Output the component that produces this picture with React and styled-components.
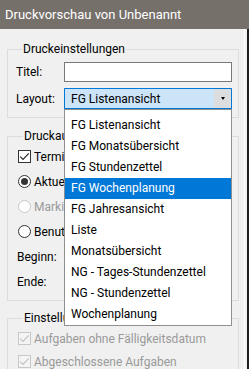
import React from "react";
import styled, { createGlobalStyle } from "styled-components";

const COLORS = {
  title: "#76706b",
  face: "#f0f0f0",
  groupLine: "#dcdcdc",
  text: "#000000",
  disabled: "#9a9a9a",
  accent: "#0078d7",
  accentLight: "#cce4f7",
};

const LAYOUTS = [
  "FG Listenansicht",
  "FG Monatsübersicht",
  "FG Stundenzettel",
  "FG Wochenplanung",
  "FG Jahresansicht",
  "Liste",
  "Monatsübersicht",
  "NG - Tages-Stundenzettel",
  "NG - Stundenzettel",
  "Wochenplanung",
];

const GlobalStyle = createGlobalStyle`
  body {
    margin: 0;
    background: ${COLORS.face};
    font-family: Roboto, "Noto Sans", sans-serif;
    font-size: 12px;
    color: ${COLORS.text};
  }
`;

const Window = styled.div`
  width: 249px;
  height: 369px;
  overflow: hidden;
  display: flex;
  flex-direction: column;
`;

const TitleBar = styled.div`
  height: 29px;
  flex: none;
  display: flex;
  align-items: center;
  padding-left: 5px;
  background: ${COLORS.title};
  color: #fff;
  font-size: 13px;
`;

const Frame = styled.div`
  flex: 1;
  display: flex;
  min-height: 0;
`;

const Panel = styled.div`
  flex: 1;
  background: ${COLORS.face};
  padding: 12px 5px 0 7px;
  display: flex;
  flex-direction: column;
`;

const Edge = styled.div`
  flex: none;
  width: 2px;
  border-left: 1px solid #fdfdfd;
  border-right: 2px solid #1c1c1c;
  background: ${COLORS.face};
`;

const Group = styled.fieldset`
  margin: 0 0 ${(p) => p.$gap || 0}px 0;
  padding: ${(p) => p.$pad};
  border: 1px solid ${COLORS.groupLine};
  display: flex;
  flex-direction: column;
  gap: ${(p) => p.$rowGap || 0}px;
  min-width: 0;
`;

const Legend = styled.legend`
  padding: 0 1px;
  margin-left: 6px;
  height: 16px;
  line-height: 16px;
  font-size: 12px;
`;

const Row = styled.div`
  display: flex;
  align-items: center;
  height: ${(p) => p.$h || 21}px;
  flex: none;
`;

const Label = styled.span`
  width: 48px;
  flex: none;
`;

const TextBox = styled.div`
  width: 168px;
  height: 20px;
  box-sizing: border-box;
  border: 1px solid #7a7a7a;
  background: #fff;
`;

const ComboWrap = styled.div`
  position: relative;
  width: 168px;
`;

const Combo = styled.div`
  height: 21px;
  box-sizing: border-box;
  border: 1px solid ${COLORS.accent};
  background: ${COLORS.accentLight};
  display: flex;
  align-items: center;
  padding-left: 6px;
`;

const ComboText = styled.span`
  flex: 1;
`;

const ComboButton = styled.span`
  width: 17px;
  align-self: stretch;
  background: #dcdddf;
  display: flex;
  align-items: center;
  justify-content: center;
`;

const Arrow = styled.span`
  width: 0;
  height: 0;
  border-left: 2.5px solid transparent;
  border-right: 2.5px solid transparent;
  border-top: 3px solid #000;
`;

const DropList = styled.ul`
  position: absolute;
  top: 100%;
  left: 0;
  right: 0;
  z-index: 5;
  margin: 0;
  padding: 5px 0 0;
  list-style: none;
  background: #fff;
  border: 1px solid #8f8f8f;
  box-sizing: border-box;
`;

const Item = styled.li`
  height: 21px;
  line-height: 21px;
  padding-left: 6px;
  white-space: nowrap;
  background: ${(p) => (p.$active ? COLORS.accent : "transparent")};
  color: ${(p) => (p.$active ? "#fff" : COLORS.text)};
`;

const Option = styled.div`
  display: flex;
  align-items: center;
  gap: 3px;
  height: ${(p) => p.$h || 25}px;
  flex: none;
  padding-left: 1px;
  white-space: nowrap;
  color: ${(p) => (p.$disabled ? COLORS.disabled : COLORS.text)};
`;

const CheckBox = styled.span`
  width: 13px;
  height: 13px;
  box-sizing: border-box;
  flex: none;
  border: 1px solid ${(p) => (p.$disabled ? "#c8c8c8" : "#333")};
  background: ${(p) => (p.$disabled ? "#f4f4f4" : "#fff")};
  display: flex;
  align-items: center;
  justify-content: center;
`;

const Radio = styled.span`
  width: 13px;
  height: 13px;
  box-sizing: border-box;
  flex: none;
  border-radius: 50%;
  border: 1px solid ${(p) => (p.$disabled ? "#c8c8c8" : "#333")};
  background: #fff;
  display: flex;
  align-items: center;
  justify-content: center;

  &::after {
    content: "";
    display: ${(p) => (p.$checked ? "block" : "none")};
    width: 7px;
    height: 7px;
    border-radius: 50%;
    background: #333;
  }
`;

const Tick = ({ color }) => (
  <svg width="11" height="11" viewBox="0 0 11 11">
    <path d="M1.2 5.6 L4 8.4 L9.8 2.4" fill="none" stroke={color} strokeWidth="1.1" />
  </svg>
);

const Check = ({ disabled, h, children }) => (
  <Option $disabled={disabled} $h={h}>
    <CheckBox $disabled={disabled}>
      <Tick color={disabled ? "#c0c0c0" : "#222"} />
    </CheckBox>
    {children}
  </Option>
);

const RadioOption = ({ checked, disabled, children }) => (
  <Option $disabled={disabled}>
    <Radio $checked={checked} $disabled={disabled} />
    {children}
  </Option>
);

export default function App() {
  return (
    <Window>
      <GlobalStyle />
      <TitleBar>Druckvorschau von Unbenannt</TitleBar>
      <Frame>
        <Panel>
          <Group $gap={10} $pad="5px 5px 8px 8px" $rowGap={6}>
            <Legend>Druckeinstellungen</Legend>
            <Row $h={20}>
              <Label>Titel:</Label>
              <TextBox />
            </Row>
            <Row>
              <Label>Layout:</Label>
              <ComboWrap>
                <Combo>
                  <ComboText>FG Listenansicht</ComboText>
                  <ComboButton>
                    <Arrow />
                  </ComboButton>
                </Combo>
                <DropList>
                  {LAYOUTS.map((name, i) => (
                    <Item key={name} $active={i === 3}>
                      {name}
                    </Item>
                  ))}
                </DropList>
              </ComboWrap>
            </Row>
          </Group>
          <Group $gap={9} $pad="0 5px 6px 9px">
            <Legend>Druckausgabe</Legend>
            <Check>Termine</Check>
            <RadioOption checked>Aktuelle Ansicht</RadioOption>
            <RadioOption disabled>Markierter Bereich</RadioOption>
            <RadioOption>Benutzerdefiniert</RadioOption>
            <Row $h={25}>
              <Label>Beginn:</Label>
            </Row>
            <Row $h={25}>
              <Label>Ende:</Label>
            </Row>
          </Group>
          <Group $pad="1px 5px 6px 9px">
            <Legend>Einstellungen</Legend>
            <Check disabled h={23}>Aufgaben ohne Fälligkeitsdatum</Check>
            <Check disabled h={23}>Abgeschlossene Aufgaben</Check>
          </Group>
        </Panel>
        <Edge />
      </Frame>
    </Window>
  );
}
